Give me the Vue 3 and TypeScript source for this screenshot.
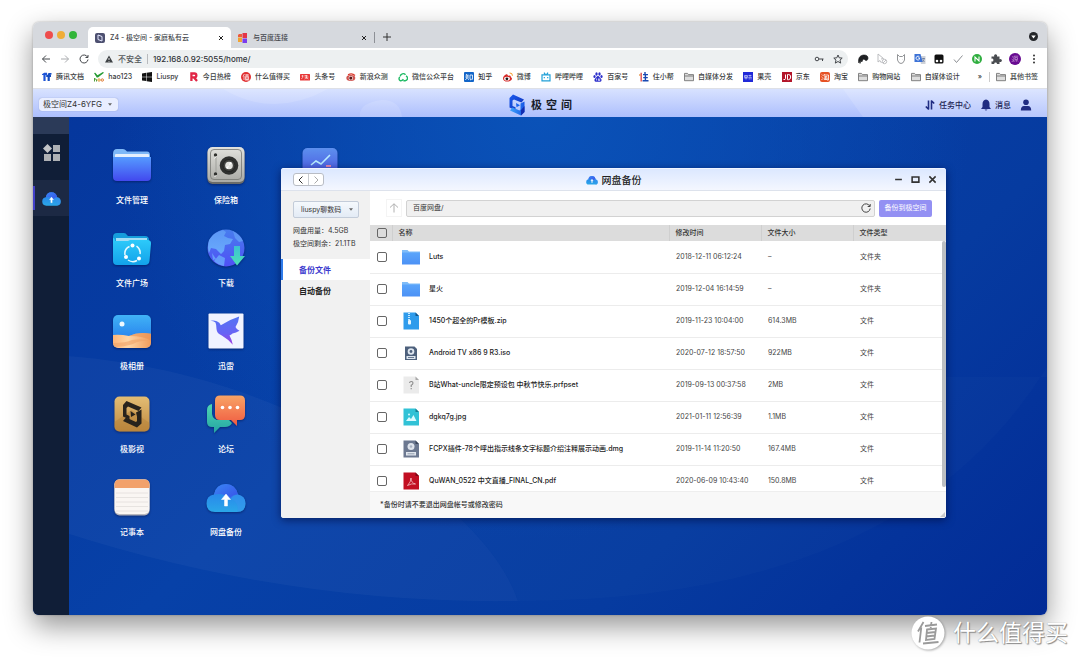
<script setup lang="ts">
import { ref } from 'vue'

interface Bookmark { icon: string; label: string }
interface AppItem { icon: string; label: string }
interface FileRow { icon: string; name: string; time: string; size: string; type: string }

const url = ref('192.168.0.92:5055/home/')
const path = ref('百度网盘/')
const section = ref('backup')

const bookmarks: Bookmark[] = [
  { icon: 'b-docs', label: '腾讯文档' },
  { icon: 'b-hao', label: 'hao123' },
  { icon: 'b-win', label: 'Liuspy' },
  { icon: 'b-r', label: '今日热榜' },
  { icon: 'b-zhi', label: '什么值得买' },
  { icon: 'b-tou', label: '头条号' },
  { icon: 'b-sina', label: '新浪众测' },
  { icon: 'b-wx', label: '微信公众平台' },
  { icon: 'b-zhihu', label: '知乎' },
  { icon: 'b-weibo', label: '微博' },
  { icon: 'b-bili', label: '哔哩哔哩' },
  { icon: 'b-baidu', label: '百家号' },
  { icon: 'b-zhu', label: '住小帮' },
  { icon: 'b-folder', label: '自媒体分发' },
  { icon: 'b-guo', label: '果壳' },
  { icon: 'b-jd', label: '京东' },
  { icon: 'b-tao', label: '淘宝' },
  { icon: 'b-folder', label: '购物网站' },
  { icon: 'b-folder', label: '自媒体设计' },
]

const extensions: string[] = ['e-bird', 'e-cursor', 'e-cat', 'e-translate', 'e-tamper', 'e-check', 'e-green', 'e-puzzle', 'e-avatar', 'e-dots']

const apps: AppItem[] = [
  { icon: 'a-folder', label: '文件管理' },
  { icon: 'a-safe', label: '保险箱' },
  { icon: 'a-chart', label: '' },
  { icon: 'a-square', label: '文件广场' },
  { icon: 'a-globe', label: '下载' },
  { icon: '', label: '' },
  { icon: 'a-photo', label: '极相册' },
  { icon: 'a-thunder', label: '迅雷' },
  { icon: '', label: '' },
  { icon: 'a-video', label: '极影视' },
  { icon: 'a-forum', label: '论坛' },
  { icon: '', label: '' },
  { icon: 'a-note', label: '记事本' },
  { icon: 'a-cloud', label: '网盘备份' },
]

const files: FileRow[] = [
  { icon: 'f-folder', name: 'Luts', time: '2018-12-11 06:12:24', size: '–', type: '文件夹' },
  { icon: 'f-folder', name: '星火', time: '2019-12-04 16:14:59', size: '–', type: '文件夹' },
  { icon: 'f-zip', name: '1450个超全的Pr模板.zip', time: '2019-11-23 10:04:00', size: '614.3MB', type: '文件' },
  { icon: 'f-iso', name: 'Android TV x86 9 R3.iso', time: '2020-07-12 18:57:50', size: '922MB', type: '文件' },
  { icon: 'f-unknown', name: 'B站What-uncle限定预设包 中秋节快乐.prfpset', time: '2019-09-13 00:37:58', size: '2MB', type: '文件' },
  { icon: 'f-jpg', name: 'dgkq7g.jpg', time: '2021-01-11 12:56:39', size: '1.1MB', type: '文件' },
  { icon: 'f-dmg', name: 'FCPX插件-78个呼出指示线条文字标题介绍注释展示动画.dmg', time: '2019-11-14 11:20:50', size: '167.4MB', type: '文件' },
  { icon: 'f-pdf', name: 'QuWAN_0522 中文直播_FINAL_CN.pdf', time: '2020-06-09 10:43:40', size: '150.8MB', type: '文件' },
]
</script>

<template>
  <div class="page">
    <svg class="defs" aria-hidden="true">
      <defs>
        <linearGradient id="g-folder" x1="0" y1="0" x2="0" y2="1"><stop offset="0" stop-color="#559bff" /><stop offset="1" stop-color="#4248ee" /></linearGradient>
        <linearGradient id="g-cyan" x1="0" y1="0" x2="0" y2="1"><stop offset="0" stop-color="#2fcdfb" /><stop offset="1" stop-color="#12a2ea" /></linearGradient>
        <linearGradient id="g-metal" x1="0" y1="0" x2="0" y2="1"><stop offset="0" stop-color="#e2e2de" /><stop offset="1" stop-color="#aaaaa5" /></linearGradient>
        <linearGradient id="g-globe" x1="0" y1="0" x2="0" y2="1"><stop offset="0" stop-color="#477dee" /><stop offset="1" stop-color="#5050f5" /></linearGradient>
        <linearGradient id="g-land" x1="0" y1="0" x2="0" y2="1"><stop offset="0" stop-color="#609cf6" /><stop offset="1" stop-color="#6eb7ff" /></linearGradient>
        <linearGradient id="g-green" x1="0" y1="0" x2="0" y2="1"><stop offset="0" stop-color="#3bbfd4" /><stop offset="1" stop-color="#4de1b5" /></linearGradient>
        <linearGradient id="g-sky" x1="0" y1="0" x2="0" y2="1"><stop offset="0" stop-color="#45bbf8" /><stop offset="1" stop-color="#1b6ae9" /></linearGradient>
        <linearGradient id="g-sand" x1="0" y1="0" x2="1" y2="0"><stop offset="0" stop-color="#ffb475" /><stop offset=".4" stop-color="#ffd5a5" /><stop offset="1" stop-color="#f09958" /></linearGradient>
        <linearGradient id="g-bird" x1="0" y1="0" x2="0" y2="1"><stop offset="0" stop-color="#5375f3" /><stop offset=".6" stop-color="#6863f5" /><stop offset="1" stop-color="#a43be0" /></linearGradient>
        <linearGradient id="g-gold" x1="0" y1="0" x2="0" y2="1"><stop offset="0" stop-color="#e3bd74" /><stop offset="1" stop-color="#c08b42" /></linearGradient>
        <linearGradient id="g-orange" x1="0" y1="0" x2="0" y2="1"><stop offset="0" stop-color="#f8a466" /><stop offset="1" stop-color="#f05a41" /></linearGradient>
        <linearGradient id="g-teal" x1="0" y1="0" x2="0" y2="1"><stop offset="0" stop-color="#4fd6b3" /><stop offset="1" stop-color="#24a5a3" /></linearGradient>
        <linearGradient id="g-cloud" x1="0" y1="0" x2="0" y2="1"><stop offset="0" stop-color="#2878ed" /><stop offset="1" stop-color="#2aa7e8" /></linearGradient>
        <linearGradient id="g-cloud2" x1="0" y1="0" x2="1" y2="1"><stop offset="0" stop-color="#3d89f5" /><stop offset="1" stop-color="#3a46e8" /></linearGradient>
        <linearGradient id="g-chart" x1="0" y1="0" x2="0" y2="1"><stop offset="0" stop-color="#5d90ee" /><stop offset="1" stop-color="#4547dc" /></linearGradient>
        <linearGradient id="g-logo" x1="0" y1="0" x2="1" y2="1"><stop offset="0" stop-color="#1a5cf0" /><stop offset="1" stop-color="#1230b4" /></linearGradient>
        <linearGradient id="g-logo2" x1="0" y1="0" x2="1" y2="0"><stop offset="0" stop-color="#3fa4fb" /><stop offset="1" stop-color="#1556e6" /></linearGradient>
        <linearGradient id="g-file" x1="0" y1="0" x2="0" y2="1"><stop offset="0" stop-color="#5aa5fb" /><stop offset="1" stop-color="#4c91f5" /></linearGradient>
      </defs>

      <!-- bookmark icons -->
      <symbol id="b-docs" viewBox="0 0 10 10"><path d="M0 2.2 2.2.8h2.9v2.1H3.6V9H1.4V3H0z" fill="#1e55d8" /><path d="M4.200 3h1.300L6.500 1H9.500v1.600L8 3h1v2H7.800v4H5.600V5H4.200z" fill="#164dc1" /></symbol>
      <symbol id="b-hao" viewBox="0 0 10 10"><path d="M0 1 1.3.8 3.5 3.2 8.9 0 10 .7 4 5.4 2.7 5.4z" fill="#279b35" /><path d="M.5 6v3.500M.5 7.500q2-1.300 2 .2v1.800" fill="none" stroke="#4ea03a" /><circle cx="5" cy="8" r="1.200" fill="none" stroke="#de9a35" /><circle cx="8.300" cy="8" r="1.200" fill="none" stroke="#de7a35" /></symbol>
      <symbol id="b-win" viewBox="0 0 10 10"><path d="M0 1.4 4.2.8v3.9H0zM4.7.7 10 0v4.7H4.7zM0 5.2h4.2v3.9L0 8.5zM4.7 5.2H10V10l-5.3-.8z" fill="#111" /></symbol>
      <symbol id="b-r" viewBox="0 0 10 10"><path d="M2.4 9V1.5h3a1.9 1.9 0 0 1 0 3.9H2.7M5 5.5 8 9" fill="none" stroke="#e12646" stroke-width="2.3" /></symbol>
      <symbol id="b-zhi" viewBox="0 0 10 10"><circle cx="5" cy="5" r="5" fill="#e12f31" /><path d="M3.4 2 2 4.5M3 4v4M4 3h4M6 2v2M4.6 4.4h2.8v3H4.6zM4.6 5.9h2.8M4 8h4.3" fill="none" stroke="#fff" stroke-width=".7" /></symbol>
      <symbol id="b-tou" viewBox="0 0 10 10"><rect y="2" width="10" height="6.5" rx=".5" fill="#e83737" /><path d="M1.5 4h2M2.6 3v2.5L1.4 7M4.5 3.5h3M4.5 5h4M6.4 3.2v3.6M4.6 7l1.7-1.5L8.4 7" stroke="#fff" stroke-width=".6" fill="none" /></symbol>
      <symbol id="b-sina" viewBox="0 0 10 10"><ellipse cx="4.800" cy="6" rx="4.500" ry="3" fill="#d05550" /><circle cx="4.800" cy="6.100" r="2.200" fill="#fff" /><circle cx="4.800" cy="6.100" r="1.600" fill="#5a1515" /><path d="M2 2.800Q6 .5 9 3.500" fill="none" stroke="#d9392c" stroke-width="1.200" /></symbol>
      <symbol id="b-wx" viewBox="0 0 10 10"><path d="M2.200 4.300A3 3 0 0 1 7.500 2.800M8 4a2.500 2.500 0 0 1-.8 4.800H5.400M1.800 5A2.300 2.300 0 0 0 2.400 8.800q1.800.2 3-1.600" fill="none" stroke="#20ba65" stroke-width="1.400" /></symbol>
      <symbol id="b-zhihu" viewBox="0 0 10 10"><rect width="10" height="10" rx="1" fill="#1265c8" /><path d="M2.6 2 2 3.6M2.2 3.2h2.6M1.3 5h3.7M3.3 3.3Q3.2 6.5 1.4 8M3.5 6l1.2 1.8M6 3h2.5v4.3H7.4L6.6 8v-.8H6z" fill="none" stroke="#fff" stroke-width=".8" /></symbol>
      <symbol id="b-weibo" viewBox="0 0 10 10"><path d="M0 6.5C0 4.5 2.6 2 4.2 2.4c1 .2.7 1.3.7 1.3s2.400-.9 2.800.3c.3.8-.1 1-.1 1S9 5.500 9 6.600C9 8.500 6.500 9.600 4.200 9.600S0 8.500 0 6.500z" fill="#d72b28" /><ellipse cx="4" cy="6.700" rx="2.900" ry="1.900" fill="#fff" /><circle cx="3.900" cy="6.800" r="1.400" fill="#20191b" /><path d="M6.600 1q3-.3 2.800 2.800" fill="none" stroke="#f59b27" stroke-width="1" /></symbol>
      <symbol id="b-bili" viewBox="0 0 10 10"><path d="M1 2.800h8v6H1zM3 .6l1.400 2M7 .6l-1.400 2M3.300 5v1.300M6.700 5v1.300" fill="none" stroke="#20a0d8" stroke-width="1.200" /></symbol>
      <symbol id="b-baidu" viewBox="0 0 10 10"><g fill="#2c2fcb"><ellipse cx="3.500" cy="2" rx="1.200" ry="1.700" /><ellipse cx="6.500" cy="2" rx="1.200" ry="1.700" /><ellipse cx="1.500" cy="4.500" rx="1.100" ry="1.500" /><ellipse cx="8.500" cy="4.500" rx="1.100" ry="1.500" /><path d="M5 4c1.500 0 1.600 1.600 2.800 2.500 1.400 1.300.8 3.500-1 3.300H3.200c-1.800.2-2.400-2-1-3.300C3.400 5.600 3.500 4 5 4z" /></g><path d="M3.600 6.500v2M5.500 6.500v2h1.200v-2" fill="none" stroke="#fff" stroke-width=".7" /></symbol>
      <symbol id="b-zhu" viewBox="0 0 10 10"><path d="M2.200.8v8.700" stroke="#e05b5d" stroke-width="1.500" /><path d="M1 2v2" stroke="#e9a05d" stroke-width="1.500" /><path d="M6 0v2M4 2.600H9M4.200 5.600h4.600M3.600 8.800H9.500M6.400 2.500v6" stroke="#1949b2" stroke-width="1.400" /></symbol>
      <symbol id="b-folder" viewBox="0 0 10 10"><path d="M.5 8.700V1.400h3l1 1.200h5v6.100zM.5 4h9" fill="#ddd" stroke="#777" stroke-width=".9" /></symbol>
      <symbol id="b-guo" viewBox="0 0 10 10"><rect width="10" height="10" fill="#2029d8" /><path d="M1.500 3.500h3v1.800h-3zM3 3.500v4M1.300 6h3.400M5.500 3.500h3M7 2.800v2M5.300 5.400h3.500M6.200 6v1.500M8 6v1.500" stroke="#e0e5ff" stroke-width=".6" fill="none" /></symbol>
      <symbol id="b-jd" viewBox="0 0 10 10"><rect width="10" height="10" fill="#b3162a" /><path d="M3.500 2.500v4Q3.500 8 1.500 7.500M5.500 2.500V7.700h1Q8.700 7.500 8.700 5T6.500 2.500z" fill="none" stroke="#fff" /></symbol>
      <symbol id="b-tao" viewBox="0 0 10 10"><rect width="10" height="10" rx="2" fill="#e65224" /><path d="M1.600 2.500l1 .8M1.500 4.800l1 .7M1.500 8l1.300-1.500M4.500 2 3.700 4M4.300 3h4.200v5H7M4.300 4.600h3M3.900 6h3.600M5.700 4.600v2.700M4.200 6.400v1.100h3V6.400" fill="none" stroke="#fff" stroke-width=".8" /></symbol>

      <!-- extension icons -->
      <symbol id="e-bird" viewBox="0 0 12 12"><path d="M1.500 8C1.500 4 4 2 7 2c2.600-.1 4.300 1.300 4 3.500-.2 1.800-1.800 2.500-2.700 1.700C7.500 6.300 6.500 6 6 6.500L4.800 9 4 7.500l-1 3L2.500 8 1.800 10z" fill="#202124" stroke="#202124" stroke-width=".6" /></symbol>
      <symbol id="e-cursor" viewBox="0 0 12 12"><path d="M2 1v8l2-1.500L5.500 10M2 1l5.500 4.500L5 6" fill="none" stroke="#b5b7ba" stroke-width=".9" /><circle cx="8.500" cy="8.500" r="2.200" fill="none" stroke="#b5b7ba" stroke-width=".9" /><path d="m7 10 3-3" stroke="#b5b7ba" stroke-width=".9" /></symbol>
      <symbol id="e-cat" viewBox="0 0 12 12"><path d="M2.500 1.500V7Q3.500 10.500 6 10.500T9.500 7V1.500L7.500 3.500h-3zM4.500 6.500h.2M7.300 6.500h.2" fill="none" stroke="#929497" /></symbol>
      <symbol id="e-translate" viewBox="0 0 12 12"><path d="M5 3h6.500v8H7z" fill="#cfd2d8" /><path d="M.5 1h6l2.200 8H.5z" fill="#3d73d7" /><path d="M5.500 4A1.900 1.900 0 1 0 5.500 6.200V5H4" fill="none" stroke="#fff" stroke-width=".9" /><path d="M8 5.500h3M9.500 5v1M10.500 5.600 8.500 9M8.500 6.500 10.500 9" stroke="#667a9e" stroke-width=".7" /></symbol>
      <symbol id="e-tamper" viewBox="0 0 12 12"><rect x="1.500" y="1.500" width="9" height="9" rx="1.500" fill="#111" /><circle cx="4" cy="8" r="1.300" fill="#fff" /><circle cx="8" cy="8" r="1.300" fill="#fff" /></symbol>
      <symbol id="e-check" viewBox="0 0 12 12"><path d="M2 6.500 4.500 9.500 10.500 2.500" fill="none" stroke="#8c8f93" /></symbol>
      <symbol id="e-green" viewBox="0 0 12 12"><circle cx="6" cy="6" r="5" fill="#2fae3f" /><path d="M4 8.500V4l4 4V3.500" fill="none" stroke="#fff" stroke-width="1.100" /></symbol>
      <symbol id="e-puzzle" viewBox="0 0 12 12"><path d="M1.500 3.500h2.800a1.500 1.500 0 1 1 2.600 0h2.600v2.800a1.500 1.500 0 1 1 0 2.500v2.200H7a1.400 1.400 0 1 0-2.800 0H1.500V8.300a1.400 1.400 0 1 0 0-2.600z" fill="#4a4d51" /></symbol>
      <symbol id="e-avatar" viewBox="0 0 12 12"><circle cx="6" cy="6" r="6" fill="#680b91" /><path d="m3 3.500 1 .8M2.700 6l1 .6M2.800 9l1.200-1.600M5 3.200h4.200M5 3.200Q5 7 4.300 8.700M6 4.600h2.500v2H6zM7.300 6.600v2.200M6 7.500l-.5 1M8.500 7.500l.6 1" fill="none" stroke="#d9b3e6" stroke-width=".6" /></symbol>
      <symbol id="e-dots" viewBox="0 0 12 12"><g fill="#333"><circle cx="6" cy="2.500" r="1" /><circle cx="6" cy="6" r="1" /><circle cx="6" cy="9.500" r="1" /></g></symbol>

      <!-- desktop app icons -->
      <symbol id="a-folder" viewBox="0 0 40 40"><path d="M1 9Q1 4 5 4h6q2 0 3 1.500l1 1h20q3 0 3 4V20H1z" fill="#7db8f8" /><rect x="3" y="9" width="34" height="8" rx="1" fill="#e4effd" /><path d="M1 12h38v20q0 4-4 4H5q-4 0-4-4z" fill="url(#g-folder)" /></symbol>
      <symbol id="a-safe" viewBox="0 0 40 40"><rect x="1.500" y="3" width="37" height="36" rx="5" fill="#6b6c69" /><rect x="1.500" y="2" width="37" height="35" rx="5" fill="url(#g-metal)" /><rect x="4.500" y="4.500" width="31" height="30" rx="3.500" fill="none" stroke="#767773" stroke-width=".8" /><path d="M10 9v22" stroke="#a0a19c" /><circle cx="9.500" cy="10" r="1.700" fill="#30312f" /><circle cx="9.500" cy="29" r="1.700" fill="#30312f" /><path d="m10.500 11-2 2.500M10.500 30l-2 2" stroke="#f8f8f5" /><circle cx="23" cy="20.500" r="9.300" fill="#2f302f" /><circle cx="23" cy="20.500" r="6" fill="#434442" stroke="#232423" /><circle cx="23" cy="20.500" r="3.800" fill="#e3e3df" /><path d="m23 20.500 1-3.500 2 1zM23 20.500l-3 2 1.500 1.500z" fill="#fff" /></symbol>
      <symbol id="a-chart" viewBox="0 0 40 40"><rect x="2.500" y="3" width="35" height="34" rx="5" fill="url(#g-chart)" /><path d="m11 20 5-4 5 3L30 10" fill="none" stroke="#b8ecff" stroke-width="1.600" /><path d="M26 21h5" stroke="#ea8bb0" stroke-width="2" /></symbol>
      <symbol id="a-square" viewBox="0 0 40 40"><path d="M1 9q0-4 4-4h7q2 0 3 2l1 1h17q4 0 4 4v20H1z" fill="#159ddc" /><path d="M4 10h31v12H4z" fill="#a3ddf5" /><path d="M1 10q2 0 2 3h13l2-1h17q4.500 0 4 4l-1.500 17q-.5 4-4.500 4H5q-4 0-4-4z" fill="url(#g-cyan)" /><path d="M13 27q-1-6 4.500-8.500M24.500 18q4.500 3.500 3.500 8M16 32q4.500 3 9 .5" fill="none" stroke="#e5f9ff" stroke-width="1.500" /><circle cx="20.500" cy="17.500" r="2" fill="#fff" /><circle cx="27" cy="30.500" r="2" fill="#fff" /><circle cx="14" cy="29" r="2" fill="#fff" /></symbol>
      <symbol id="a-globe" viewBox="0 0 40 40"><circle cx="20" cy="20" r="18.500" fill="url(#g-globe)" /><path d="M3 12Q8 4 17 2l3 2-2 4 4 2 5 1-3 5-5 1-1 6-3 3-5-5-5-1-2 5Q1 19 3 12z" fill="url(#g-land)" opacity=".85" /><path d="M27 3q7 4 10 10l-4 1-4-4zM13 27l6 3-1 8Q12 37 8 33zM6 25l4 6-3 1z" fill="url(#g-land)" opacity=".75" /><path d="M28 18h6v10h5l-8 9.500-7-9.500h4z" fill="url(#g-green)" /></symbol>
      <symbol id="a-photo" viewBox="0 0 40 40"><clipPath id="c-photo"><rect x="1" y="4" width="38" height="33" rx="5" /></clipPath><g clip-path="url(#c-photo)"><rect width="40" height="40" fill="url(#g-sky)" /><path d="M0 24q8-1 17 1 10-5 23-2v17H0z" fill="url(#g-sand)" /><path d="M17 25q10-5 23-2v8q-6-6-23-6z" fill="#e99355" opacity=".6" /><path d="M0 32q14 0 20-3 10-2 20 1-12-1-19 3-9 3-21 3z" fill="#f0a268" opacity=".6" /><circle cx="10" cy="13" r="2.500" fill="#eef9ff" /></g></symbol>
      <symbol id="a-thunder" viewBox="0 0 40 40"><rect x="2.500" y="2.500" width="35" height="35" rx="1" fill="#f0f3ff" /><path d="M4.500 9.800q3.500-.8 6.300.500 3 1 4 4 8-5.500 18.400-8.800-.5 6-3.700 10.500 1 2.500 4 3.800-3.500 2-7 2.700-1 1.200-3 2 2.500 4.500 3.300 9.300-4.500-5.500-11-9.300-5-2-5.300-6.500 0-4 -1-6.500-2-1.500-5-1.700z" fill="url(#g-bird)" /></symbol>
      <symbol id="a-video" viewBox="0 0 40 40"><rect x="2.500" y="2.500" width="35" height="35" rx="5" fill="url(#g-gold)" /><path d="m2.500 28 17-12 18 13v4q0 4.500-5 4.500h-25q-5 0-5-5z" fill="#b27c34" opacity=".4" /><path d="M14.500 7 29.500 13.500 26.500 17 16 12.500 14.500 14v6.500l3 1.500v3.500L11 22.500V11z" fill="#28231c" /><path d="m24 18.500 5.500-3v14L25 33.500 11 27l3-3.500 10 4.500 1-1v-4.500z" fill="#28231c" /><path d="m18.500 17 5 3.500-4.500 2.500z" fill="#28231c" /></symbol>
      <symbol id="a-forum" viewBox="0 0 40 40"><path d="M6 10q-5 1-5 6v12q0 5 5 5h2v6l6-6h5q5 0 7-4l-3-3H13q-6 0-7-6z" fill="url(#g-teal)" /><path d="M14 1.500h20q5 0 5 5V21q0 5-5 5h-3v6l-6-6H14q-5 0-5-5V6.500q0-5 5-5z" fill="url(#g-orange)" /><g fill="#fff"><circle cx="16.500" cy="13.500" r="1.800" /><circle cx="24" cy="13.500" r="1.800" /><circle cx="31.500" cy="13.500" r="1.800" /></g></symbol>
      <symbol id="a-note" viewBox="0 0 40 40"><rect x="2.500" y="2.500" width="35" height="36" rx="5" fill="#b8b7bd" /><rect x="2.500" y="2.500" width="35" height="34.500" rx="5" fill="#faf6f3" /><path d="M2.500 11V7.500q0-5 5-5h25q5 0 5 5V11z" fill="#f2a16b" /><path d="M4 16h32M4 20.500h32M4 25h32M4 29.500h32M4 34h32" stroke="#e2dedb" stroke-width=".8" /></symbol>
      <symbol id="a-cloud" viewBox="0 0 40 40"><path d="M9 35q-8.500 0-8.500-8.500 0-8 7.500-9Q10 7 20 7q9.500 0 12 10.500 7.500 1.500 7.500 9 0 8.500-8.500 8.500z" fill="url(#g-cloud)" /><path d="M8 17.500Q10 7 20 7q9.500 0 12 10.500-5 .5-7 4-8-6-17-4z" fill="url(#g-cloud2)" opacity=".85" /><path d="M32 17.500q7.500 1.500 7.500 9 0 8.500-8.500 8.500 3-9-7-14 3-4 8-3.500z" fill="#3794ee" opacity=".5" /><path d="m20 17 4.500 5.500h-3V29h-3v-6.500h-3z" fill="#fff" stroke="#fff" stroke-width=".5" /></symbol>

      <!-- file type icons -->
      <symbol id="f-folder" viewBox="0 0 20 20"><path d="M1 3h5.500l1.500 1.500h11V9H1z" fill="#7fbcf8" /><path d="M1 5.500h18v12H1z" fill="url(#g-file)" /></symbol>
      <symbol id="f-zip" viewBox="0 0 20 20"><path d="M2.500 1.500h12L18 5v13.500H2.500z" fill="#2f9cec" /><path d="M14.500 1.500V5H18z" fill="#14568a" /><path d="M8 2v8" stroke="#c8e9ff" stroke-width="2" stroke-dasharray="1 1" /><rect x="7" y="9" width="3" height="4.500" rx="1" fill="#e8f7ff" /></symbol>
      <symbol id="f-iso" viewBox="0 0 20 20"><path d="M4 3.500h9.500L16 6v11H4z" fill="#4d607c" /><circle cx="10" cy="8.500" r="3.300" fill="#dfe7f0" /><circle cx="10" cy="8.500" r="1.400" fill="#4d607c" /><rect x="5.500" y="13" width="9" height="3" fill="#dce5ee" /><path d="M7 14.500h6" stroke="#4d607c" stroke-width=".8" /></symbol>
      <symbol id="f-unknown" viewBox="0 0 20 20"><path d="M2.500 1.500h12L18 5v13.500H2.500z" fill="#ebebeb" /><path d="M14.500 1.500V5H18z" fill="#a9a9a9" /><path d="M8.500 8q.3-1.500 1.800-1.500Q12 6.500 12 8t-1.800 2.200V12M10.200 13v1.300" fill="none" stroke="#8a8a8a" stroke-width="1.100" /></symbol>
      <symbol id="f-jpg" viewBox="0 0 20 20"><path d="M2.500 1.500h12L18 5v13.500H2.500z" fill="#31c2d6" /><path d="M14.500 1.500V5H18z" fill="#167f91" /><path d="m5 14 3-4 2 2 2.500-4 3 6z" fill="#d9fbff" /><circle cx="8" cy="7.500" r="1" fill="#d9fbff" /></symbol>
      <symbol id="f-dmg" viewBox="0 0 20 20"><path d="M2.500 1.500h12L18 5v13.500H2.500z" fill="#6c7890" /><path d="M14.500 1.500V5H18z" fill="#394459" /><circle cx="10" cy="7.500" r="3.500" fill="#dfe4ec" /><circle cx="10" cy="7.500" r="1.300" fill="#aab3c2" /><rect x="5" y="13" width="10" height="3.500" fill="#e1e6ed" /><path d="M6.500 14.800h7" stroke="#8995a8" stroke-width=".9" /></symbol>
      <symbol id="f-pdf" viewBox="0 0 20 20"><path d="M2.500 1.500h12L18 5v13.500H2.500z" fill="#c20f22" /><path d="M14.500 1.500V5H18z" fill="#7b0714" /><path d="M6.500 14.500q3.500-3.500 3.500-7.500 0 5 4.500 6-4-.8-8 1.500z" fill="none" stroke="#fbd5d8" stroke-width=".7" /></symbol>

      <symbol id="logo" viewBox="0 0 18 22"><path d="M5 .5 16 5.500 13.500 8.500 6 5.500 4.500 6.500V12l3 1.300v3L1.500 13.500V4z" fill="url(#g-logo)" /><path d="m12.500 9.500 4-2v10.500L13 21.500 2 16.500l2.500-3 7 3 1-1z" fill="url(#g-logo2)" /><path d="m8 9 4 2.300-3.500 2z" fill="#1b63ee" /><path d="M13 21.500v-5.500l3.500-4v6z" fill="#122db0" /></symbol>
    </svg>

    <div class="browser">
      <header class="tabs">
        <div class="lights"><i class="red"></i><i class="amber"></i><i class="green"></i></div>
        <div class="tab active">
          <svg class="fav" viewBox="0 0 10 10"><rect width="10" height="10" rx="2" fill="#4d5070" /><path d="M3 2l4 1.500V8L3 6.500z" fill="none" stroke="#e6e8ff" /></svg>
          <span>Z4 - 极空间 - 家庭私有云</span>
          <button class="close" aria-label="关闭标签页"><svg viewBox="0 0 6 6"><path d="m1 1 4 4M5 1 1 5" /></svg></button>
        </div>
        <div class="tab">
          <svg class="fav" viewBox="0 0 10 10"><path d="M1 1h3v3H0V2z" fill="#ed5a3d" /><path d="M4.500 0H9v5H4.500z" fill="#e33547" /><path d="M4.500 5.500H9V10H4.500z" fill="#7b3cec" /><path d="M0 4.500h4V9H0z" fill="#f1a331" /></svg>
          <span>与百度连接</span>
          <button class="close" aria-label="关闭标签页"><svg viewBox="0 0 6 6"><path d="m1 1 4 4M5 1 1 5" /></svg></button>
        </div>
        <i class="tab-sep"></i>
        <button class="new" aria-label="新标签页"><svg viewBox="0 0 8 8"><path d="M4 0v8M0 4h8" /></svg></button>
        <button class="tab-menu" aria-label="搜索标签页"><svg viewBox="0 0 8 8"><circle cx="4" cy="4" r="4" fill="#24262a" /><path d="m2 3h4L4 5.800z" fill="#fff" /></svg></button>
      </header>

      <div class="toolbar">
        <button aria-label="后退"><svg viewBox="0 0 10 10"><path d="M9 5H1.500M5 1.500 1.500 5 5 8.500" /></svg></button>
        <button aria-label="前进" class="dim"><svg viewBox="0 0 10 10"><path d="M1 5h7.500M5 1.500 8.500 5 5 8.500" /></svg></button>
        <button aria-label="重新加载"><svg viewBox="0 0 10 10"><path d="M8.500 3A4 4 0 1 0 9 5.500M9 1v2.500H6.500" /></svg></button>
        <div class="omnibox">
          <svg class="warn" viewBox="0 0 8 8"><path d="M4 .5 8 7.500H0z" fill="#3c4043" /><path d="M4 3v2M4 6v.8" stroke="#fff" stroke-width=".8" /></svg>
          <span class="unsafe">不安全</span>
          <input v-model="url" class="url" type="text" aria-label="地址" />
          <svg class="key" viewBox="0 0 10 10"><circle cx="3" cy="5" r="1.800" /><path d="M5 5h4.500M8.500 5v2" /></svg>
          <svg class="star" viewBox="0 0 10 10"><path d="m5 1 1.200 2.800 3 .3L7 6.100l.7 3L5 7.500 2.300 9.100l.7-3L.8 4.100l3-.3z" /></svg>
        </div>
        <div class="exts">
          <button v-for="e in extensions" :key="e" :aria-label="e"><svg><use :href="'#' + e" /></svg></button>
        </div>
      </div>

      <nav class="bookmarks">
        <div class="marks">
          <a v-for="b in bookmarks" :key="b.label" href="#"><svg><use :href="'#' + b.icon" /></svg>{{ b.label }}</a>
        </div>
        <span class="more">»</span>
        <a href="#" class="other"><svg><use href="#b-folder" /></svg>其他书签</a>
      </nav>

      <div class="appbar">
        <svg class="swirl" viewBox="0 0 1014 28" preserveAspectRatio="none"><path d="M190 0q50 30 105 0zM327 28q-2-14 22-17 18 0 20 17zM810 0h204v28H830z" fill="#fff" opacity=".13" /></svg>
        <div class="device"><select aria-label="设备"><option>极空间Z4-6YFG</option></select><svg viewBox="0 0 6 4"><path d="M0 0h6L3 4z" /></svg></div>
        <div class="brand"><svg><use href="#logo" /></svg><b>极</b><b>空</b><b>间</b></div>
        <div class="actions">
          <button><svg viewBox="0 0 12 12"><path d="M4.500 1.500v9M4.800 10.500 1.800 7.500M7.500 10.500v-9M7.200 1.500l3 3" fill="none" stroke="#202c82" stroke-width="1.600" /></svg>任务中心</button>
          <button><svg viewBox="0 0 12 12"><path d="M6 .5q3.500.8 3.500 4.500v3l1.500 2H1l1.500-2V5Q2.500 1.300 6 .5zM4.500 10.500h3q-1.500 2-3 0z" fill="#202c82" /></svg>消息</button>
          <button aria-label="用户"><svg viewBox="0 0 12 12"><circle cx="6" cy="3.200" r="2.800" fill="#202c82" /><path d="M.8 11.500Q.8 7 4 7h4q3.200 0 3.200 4.500z" fill="#202c82" /></svg></button>
        </div>
      </div>

      <main class="desktop">
        <svg class="wall" viewBox="0 0 1014 498" preserveAspectRatio="none">
          <path d="M0 237C190 243 330 320 420 395Q470 440 485 484 240 488 0 405z" fill="#fff" opacity=".035" />
          <path d="M485 484Q470 440 420 395L600 260H1014V250Q870 484 485 484z" fill="#fff" opacity=".015" />
        </svg>
        <aside class="dock">
          <div class="dock-top"></div>
          <button class="dock-item grid" aria-label="应用"><svg viewBox="0 0 17 17"><path d="M4.500 0 9 4.500 4.500 9 0 4.500z" fill="#c2c4c7" /><path d="M10 1h7v7h-7zM1 10h7v7H1zM10 10h7v7h-7z" fill="#aeb1b5" /></svg></button>
          <button class="dock-item on" aria-label="网盘备份"><svg><use href="#a-cloud" /></svg></button>
        </aside>
        <div class="apps">
          <component :is="a.icon ? 'button' : 'span'" v-for="(a, i) in apps" :key="i" class="app" :aria-label="a.label || undefined">
            <svg v-if="a.icon"><use :href="'#' + a.icon" /></svg>
            <span>{{ a.label }}</span>
          </component>
        </div>

        <section class="window">
          <header class="titlebar">
            <div class="history">
              <button aria-label="后退"><svg viewBox="0 0 8 8"><path d="M5.500 0.500 2 4l3.500 3.500" stroke="#333" /></svg></button>
              <button aria-label="前进"><svg viewBox="0 0 8 8"><path d="M2.500 0.500 6 4 2.500 7.500" stroke="#aaa" /></svg></button>
            </div>
            <h1><svg><use href="#a-cloud" /></svg>网盘备份</h1>
            <div class="controls">
              <button aria-label="最小化"><svg viewBox="0 0 8 8"><path d="M1 4h6" /></svg></button>
              <button aria-label="最大化"><svg viewBox="0 0 8 8"><path d="M1 1.800h6v4.500H1z" /></svg></button>
              <button aria-label="关闭"><svg viewBox="0 0 8 8"><path d="m1.200 1.200 5.600 5.600M6.800 1.200 1.200 6.800" /></svg></button>
            </div>
          </header>
          <div class="body">
            <aside class="side">
              <div class="account"><select aria-label="账号"><option>liuspy聊数码</option></select><svg viewBox="0 0 6 4"><path d="M0 0h6L3 4z" /></svg></div>
              <p>网盘用量：4.5GB</p>
              <p>极空间剩余：21.1TB</p>
              <nav>
                <button :class="{ on: section === 'backup' }" @click="section = 'backup'">备份文件</button>
                <button :class="{ on: section === 'auto' }" @click="section = 'auto'">自动备份</button>
              </nav>
            </aside>
            <div class="content">
              <div class="pathbar">
                <button class="up" aria-label="上一级"><svg viewBox="0 0 10 10"><path d="M5 9.500V.8M1 4.500 5 .8l4 3.700" /></svg></button>
                <div class="path">
                  <input v-model="path" type="text" aria-label="路径" />
                  <button aria-label="刷新"><svg viewBox="0 0 10 10"><path d="M8.700 3A4.200 4.200 0 1 0 9.200 5.500M9.200 1v2.500H6.700" /></svg></button>
                </div>
                <button class="primary">备份到极空间</button>
              </div>
              <div class="list">
                <table>
                  <colgroup><col class="c1" /><col /><col class="c3" /><col class="c3" /><col class="c5" /></colgroup>
                  <thead>
                    <tr><th><input type="checkbox" aria-label="全选" /></th><th>名称</th><th>修改时间</th><th>文件大小</th><th>文件类型</th></tr>
                  </thead>
                  <tbody>
                    <tr v-for="f in files" :key="f.name">
                      <td><input type="checkbox" :aria-label="f.name" /></td>
                      <td><div class="name"><svg><use :href="'#' + f.icon" /></svg>{{ f.name }}</div></td>
                      <td>{{ f.time }}</td><td>{{ f.size }}</td><td>{{ f.type }}</td>
                    </tr>
                  </tbody>
                </table>
                <i class="thumb"></i>
              </div>
              <footer>*备份时请不要退出网盘帐号或修改密码<svg viewBox="0 0 6 6"><path d="M6 0v6H0z" fill="#ccc" /></svg></footer>
            </div>
          </div>
        </section>
      </main>
    </div>

    <div class="watermark">
      <svg viewBox="0 0 34 34"><circle cx="17" cy="17" r="16.500" fill="#fff" /><path d="M12.500 6 7 15.500M10.300 11.500 8.500 26.500M14 10 26 8.500M20.500 6l-.8 6M16 13.500l9-1-1.500 10.500-8.500 1zM15.500 17l9-1M15 20.500l9-1M12 27.500l15.500-1.500" fill="none" stroke="#9b9b9b" stroke-width="1.800" /></svg>
      <span>什么值得买</span>
    </div>
  </div>
</template>

<style>
body { margin: 0; background: #fff; }
</style>

<style scoped>
* { box-sizing: border-box; }
.page { position: relative; min-height: 100vh; padding: 22px 33px 44px; display: flex; flex-direction: column; overflow: hidden; font: 7px/10px Inter, "Noto Sans CJK SC", sans-serif; color: #333; background: #fff; }
.defs { position: absolute; width: 0; height: 0; }
button, input, select { font: inherit; color: inherit; border: 0; padding: 0; margin: 0; background: none; outline: none; }
button { display: flex; align-items: center; justify-content: center; }
svg { display: block; flex: none; fill: none; }
a { color: inherit; text-decoration: none; }

.browser { flex: 1; display: flex; flex-direction: column; border-radius: 6px; overflow: hidden; box-shadow: 0 11px 28px rgba(0, 0, 0, .42), 0 0 2px rgba(0, 0, 0, .3); }
.tabs { display: flex; align-items: flex-end; height: 26px; background: #d6d9de; }
.lights { display: flex; gap: 4px; padding: 0 11px 9px 12px; }
.lights i { width: 8px; height: 8px; border-radius: 50%; }
.red { background: #ee4d4d; }
.amber { background: #f0ad38; }
.green { background: #32b53a; }
.tab { display: flex; align-items: center; gap: 5px; width: 143px; height: 21px; padding: 0 7px; color: #45484d; font-weight: 500; }
.tab.active { background: #fff; border-radius: 5px 5px 0 0; }
.fav { width: 10px; height: 10px; }
.close { margin-left: auto; }
.close svg { width: 6px; height: 6px; stroke: #222; stroke-width: 1; }
.tab-sep { width: 1px; height: 11px; margin-bottom: 5px; background: #8d9096; }
.new { margin: 0 0 7px 8px; }
.new svg { width: 8px; height: 8px; stroke: #333; }
.tab-menu { margin: 0 9px 7px auto; }
.tab-menu svg { width: 9px; height: 9px; }

.toolbar { display: flex; align-items: center; gap: 9px; height: 21px; padding: 0 7px 0 8px; background: #fff; }
.toolbar > button svg { width: 10px; height: 10px; stroke: #43464a; stroke-width: 1; }
.toolbar > .dim svg { stroke: #a9abae; }
.omnibox { flex: 1; display: flex; align-items: center; height: 18px; padding: 0 5px 0 7px; border-radius: 9px; background: #edf0f1; font-size: 8px; color: #55585c; }
.warn { width: 8px; height: 8px; }
.unsafe { margin-left: 5px; padding-right: 5px; border-right: 1px solid #b8babd; font-weight: 500; }
.url { flex: 1; min-width: 0; height: 14px; margin-left: 5px; font-weight: 500; color: #303338; }
.key, .star { width: 10px; height: 10px; stroke: #44474b; stroke-width: 1; }
.star { margin-left: 9px; }
.exts { display: flex; gap: 7px; }
.exts button, .exts svg { width: 12px; height: 12px; }

.bookmarks { display: flex; align-items: center; height: 20px; padding: 0 9px 3px; background: #fff; border-bottom: 1px solid #dee0e6; white-space: nowrap; font-weight: 500; color: #3a3d40; }
.marks { flex: 1; display: flex; justify-content: space-between; }
.bookmarks a { display: flex; align-items: center; gap: 4px; }
.bookmarks svg { width: 10px; height: 10px; }
.more { margin: 0 7px 0 18px; }
.bookmarks .other { padding-left: 6px; border-left: 1px solid #ccc; }

.appbar { position: relative; display: flex; align-items: center; justify-content: space-between; height: 28px; padding: 3px 15px 0 6px; background: linear-gradient(#d8e2ff, #adbffd); font-size: 8px; }
.swirl { position: absolute; inset: 0; width: 100%; height: 100%; }
.device, .account { position: relative; display: flex; align-items: center; }
.device select { appearance: none; width: 79px; height: 13px; padding: 0 4px; border-radius: 3px; background: #e9eeff; box-shadow: 0 0 1px #7384ba; line-height: 13px; }
.device svg, .account svg { position: absolute; right: 6px; width: 4px; height: 3px; fill: #666; }
.brand { position: absolute; left: 50%; transform: translateX(-50%); display: flex; align-items: center; gap: 4px; font-size: 11px; line-height: 16px; color: #171b29; }
.brand svg { width: 18px; height: 22px; margin-right: 1px; }
.brand b { font-weight: 700; }
.actions { position: relative; display: flex; gap: 9px; color: #1c2352; font-weight: 500; }
.actions button { gap: 3px; }
.actions svg { width: 12px; height: 12px; }

.desktop { position: relative; flex: 1; display: flex; background: radial-gradient(ellipse at 50% 0, #0a52b8 0%, rgba(8, 72, 178, 0) 60%), linear-gradient(135deg, #05369c 0%, #0741a8 40%, #063ba0 70%, #022b96 100%); }
.wall { position: absolute; inset: 0; width: 100%; height: 100%; }
.dock { position: relative; width: 36px; background: #101e37; }
.dock-top { height: 17px; background: #2b3a58; }
.dock-item { width: 100%; height: 36px; }
.dock-item.grid { margin-bottom: 10px; }
.dock-item.grid svg { width: 17px; height: 17px; }
.dock-item.on { background: linear-gradient(#4340c8, #4340c8) left center / 2px 24px no-repeat #1c2944; }
.dock-item.on svg { width: 19px; height: 19px; }
.apps { position: relative; display: grid; grid-template-columns: repeat(3, 94px); grid-auto-rows: 83px; align-content: start; padding: 28px 0 0 16px; }
.app { display: flex; flex-direction: column; justify-content: flex-start; align-items: center; gap: 10px; color: #fff; font-size: 8px; font-weight: 500; }
.app svg { width: 40px; height: 40px; filter: drop-shadow(0 1px 1px rgba(0, 0, 40, .4)); }

.window { position: absolute; left: 248px; right: 101px; top: 51px; background: #fff; border-radius: 3px; overflow: hidden; box-shadow: 0 2px 8px rgba(0, 10, 60, .65); }
.titlebar { display: flex; align-items: center; justify-content: space-between; height: 23px; padding: 0 9px 0 12px; background: linear-gradient(#dce8ff, #f4f7ff); border-top: 1px solid #f0f5ff; border-bottom: 1px solid #dde2ec; }
.history { display: flex; height: 13px; border: 1px solid #b9bdc5; border-radius: 3px; background: #fff; }
.history button { width: 14px; }
.history button + button { width: 15px; border-left: 1px solid #c8cbd0; }
.history svg { width: 8px; height: 8px; }
.titlebar h1 { position: absolute; left: 50%; transform: translateX(-50%); display: flex; align-items: center; gap: 4px; margin: 0; font-size: 10px; line-height: 14px; font-weight: 500; color: #222; }
.titlebar h1 svg { width: 12px; height: 12px; }
.controls { display: flex; gap: 8px; }
.controls svg { width: 9px; height: 9px; stroke: #333; stroke-width: 1.4; }
.body { display: flex; }
.side { width: 89px; background: #f1f1f1; padding-top: 10px; }
.account { margin: 0 11px 6px 12px; }
.account select { appearance: none; width: 100%; height: 17px; padding: 0 7px; border: 1px solid #c3ccd9; border-radius: 2px; background: linear-gradient(#f5f9fd, #e3ebf5); }
.side p { margin: 0 0 0 12px; line-height: 13px; white-space: nowrap; }
.side nav { margin-top: 9px; }
.side nav button { width: 100%; height: 21px; justify-content: flex-start; padding-left: 18px; font-size: 8px; font-weight: 600; color: #222; }
.side nav .on { background: #fff; color: #3d3bce; box-shadow: inset 2px 0 #2e7bea; }
.content { flex: 1; min-width: 0; }
.pathbar { display: flex; align-items: center; gap: 4px; height: 34px; padding: 0 14px 0 16px; }
.up { width: 16px; height: 18px; border: 1px solid #f4f4f4; }
.up svg { width: 10px; height: 10px; stroke: #b0b0b0; }
.path { flex: 1; display: flex; align-items: center; height: 17px; padding: 0 3px 0 6px; border: 1px solid #d2d2d2; border-radius: 2px; background: #f0f0f0; }
.path input { flex: 1; min-width: 0; }
.path svg { width: 10px; height: 10px; stroke: #444; }
.primary { width: 53px; height: 17px; border-radius: 2px; background: #9390f3; color: #fff; white-space: nowrap; }
.list { position: relative; height: 266px; overflow: hidden; }
table { width: 100%; table-layout: fixed; border-collapse: collapse; }
.c1 { width: 22px; }
.c3 { width: 92px; }
.c5 { width: 93px; }
th { height: 16px; padding: 0 6px; background: #dcdcdc; text-align: left; font-weight: 500; border-left: 1px solid #cfcfcf; }
th:first-child { border-left: 0; }
th:first-child, td:first-child { padding: 0 0 0 7px; }
td { height: 32px; padding: 0 7px; border-bottom: 1px solid #ececec; white-space: nowrap; color: #444; }
.name { display: flex; align-items: center; gap: 8px; padding-left: 2px; color: #222; font-weight: 500; }
.name svg { width: 20px; height: 20px; }
input[type="checkbox"] { appearance: none; display: block; width: 10px; height: 10px; border: 1px solid #666; border-radius: 2px; background: #fff; }
th input[type="checkbox"] { background: none; }
.thumb { position: absolute; right: 0; top: 16px; width: 4px; height: 246px; border-radius: 2px; background: #bcbfc2; }
footer { display: flex; align-items: center; height: 27px; padding-left: 10px; background: #f8f8f8; border-top: 1px solid #eee; font-weight: 500; }
footer svg { width: 5px; height: 5px; margin: auto 1px 1px auto; }

.watermark { position: absolute; right: 12px; bottom: 9px; display: flex; align-items: center; gap: 8px; font-size: 23px; line-height: 34px; color: #fff; text-shadow: 1px 1px 1px #888, 0 0 1px #888; }
.watermark svg { width: 34px; height: 34px; filter: drop-shadow(1px 1px 1px rgba(0, 0, 0, .3)); }
</style>
